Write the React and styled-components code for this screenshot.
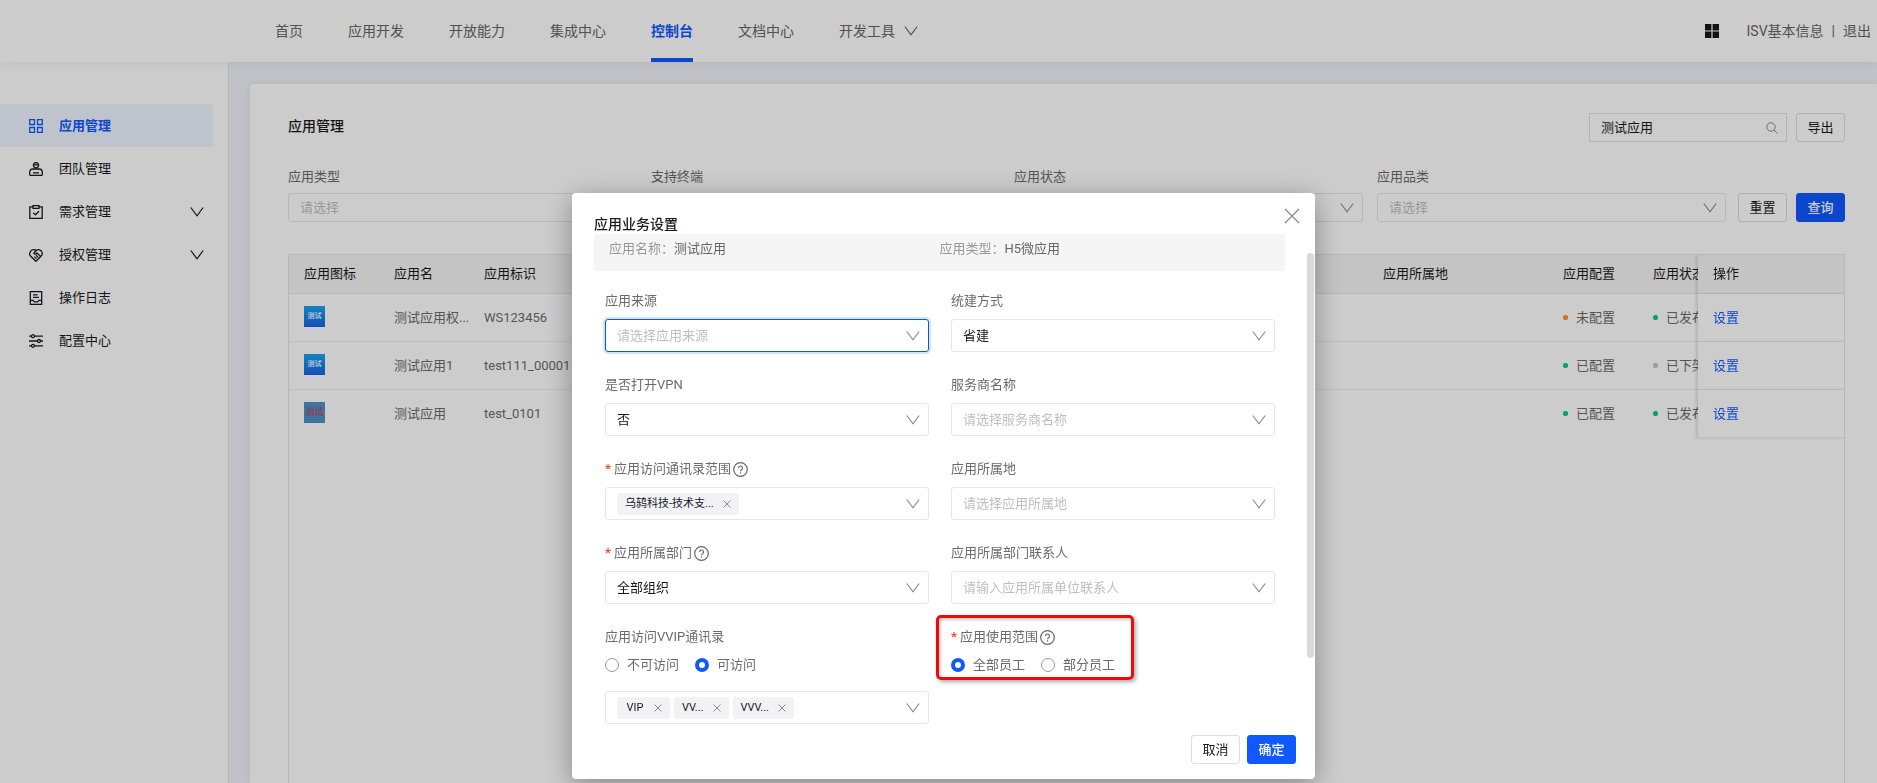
import React, { useState } from 'react'
import styled, { createGlobalStyle, css } from 'styled-components'

const navItems = ['首页', '应用开发', '开放能力', '集成中心', '控制台', '文档中心']

const menuItems = [
  { label: '应用管理', icon: 'grid' },
  { label: '团队管理', icon: 'team' },
  { label: '需求管理', icon: 'clipboard', sub: true },
  { label: '授权管理', icon: 'auth', sub: true },
  { label: '操作日志', icon: 'log' },
  { label: '配置中心', icon: 'config' },
]

const filters = ['应用类型', '支持终端', '应用状态', '应用品类']

const apps = [
  { name: '测试应用权...', code: 'WS123456', config: '未配置', configColor: '#ff9026', status: '已发布', statusColor: '#00cf86' },
  { name: '测试应用1', code: 'test111_00001', config: '已配置', configColor: '#00cf86', status: '已下架', statusColor: '#c4c4c4' },
  { name: '测试应用', code: 'test_0101', config: '已配置', configColor: '#00cf86', status: '已发布', statusColor: '#00cf86', red: true },
]

const Chevron = () => (
  <svg width="14" height="10" viewBox="0 0 14 10" fill="none" stroke="currentColor" strokeWidth="1.2" aria-hidden="true">
    <path d="M.8.5 7 8.8 13.2.5" />
  </svg>
)

const Cross = ({ size }) => (
  <svg width={size} height={size} viewBox="0 0 16 16" fill="none" stroke="currentColor" strokeWidth={size > 10 ? 1.3 : 2} aria-hidden="true">
    <path d="M1 1 15 15M15 1 1 15" />
  </svg>
)

const Help = () => (
  <svg width="15" height="15" viewBox="0 0 15 15" fill="none" stroke="#666" strokeWidth="1.2" aria-hidden="true">
    <circle cx="7.5" cy="7.5" r="6.8" />
    <path d="M5.5 6a2 2 0 1 1 3.1 1.7c-.8.5-1.1.8-1.1 1.5" />
    <path d="M7.5 10.2v1.3" />
  </svg>
)

const menuIcons = {
  grid: <path d="M.7.7h4.8v4.8H.7zM8.5.7h4.8v4.8H8.5zM.7 8.5h4.8v4.8H.7zM8.5 8.5h4.8v4.8H8.5z" />,
  team: (
    <>
      <circle cx="7" cy="3.2" r="2.6" />
      <path d="M4.4 2.8h5.2M4 7h6c2 0 3.3 1.3 3.3 3.2v2.2c0 .6-.4.9-.9.9H1.6c-.5 0-.9-.3-.9-.9v-2.2C.7 8.3 2 7 4 7zM4 10.8h6" />
    </>
  ),
  clipboard: <path d="M4 1.8H.8v11.5h12.4V1.8H10M4 .6h6v2.8H4zM4.2 7.6l2.2 2.2 3.6-3.6" />,
  auth: <path d="M7 13.2 1 7.6C-.2 4.6 2.2 1.2 5.4 1.6L7 2.4c2.4-1.6 5.2-.6 6 1.8.6 1.6.2 2.8-.8 3.8L7 13.2zM7.4 2.4 4.8 5.2c.8 1.4 2.3 1 3.2-.2l3.6 3.4M5.4 8.6l2 2M7 7.2l2.2 2.2" />,
  log: <path d="M1.3.7h11.4v12.6H1.3zM4 3.8h4.5M4 6.3h6M1.3 9.3H4l1.4 1.6h3.2L10 9.3h2.7" />,
  config: (
    <>
      <path d="M0 2.2h2.6M5.4 2.2H14M0 7h8.6M11.4 7H14M0 11.8h2.6M5.4 11.8H14" />
      <circle cx="4" cy="2.2" r="1.5" />
      <circle cx="10" cy="7" r="1.5" />
      <circle cx="4" cy="11.8" r="1.5" />
    </>
  ),
}

const FormSelect = ({ id, label, value, placeholder, required, focused }) => (
  <Field>
    <FieldLabel htmlFor={id}>
      {required && <Star>*</Star>}
      {label}
      {required && <Help />}
    </FieldLabel>
    <SelectBox $height={33} $focused={focused}>
      <select id={id} className={value ? '' : 'empty'} defaultValue={value || ''}>
        <option value={value || ''}>{value || placeholder}</option>
      </select>
      <Chevron />
    </SelectBox>
  </Field>
)

const TagInput = ({ id, tags, label }) => (
  <TagBox>
    {tags.map((tag) => (
      <Tag key={tag}>
        <span>{tag}</span>
        <button type="button" aria-label={`移除${tag}`}>
          <Cross size={8} />
        </button>
      </Tag>
    ))}
    <input id={id} type="text" aria-label={label} />
    <Chevron />
  </TagBox>
)

const RadioGroup = ({ name, options, initial }) => {
  const [value, setValue] = useState(initial)
  return (
    <Radios>
      {options.map((option) => (
        <label key={option}>
          <input type="radio" name={name} checked={value === option} onChange={() => setValue(option)} />
          {option}
        </label>
      ))}
    </Radios>
  )
}

const Header = () => (
  <TopBar>
    <Nav>
      {navItems.map((item) => (
        <NavLink href="#" key={item} $active={item === '控制台'}>{item}</NavLink>
      ))}
      <NavLink href="#">开发工具 <Chevron /></NavLink>
    </Nav>
    <UserArea>
      <svg width="14" height="14" viewBox="0 0 14 14" fill="#16181c" aria-hidden="true">
        <path d="M0 0h6.4v6.4H0zM7.6 0H14v6.4H7.6zM0 7.6h6.4V14H0zM7.6 7.6H14V14H7.6z" />
      </svg>
      <a href="#">ISV基本信息</a>
      <span>|</span>
      <a href="#">退出</a>
    </UserArea>
  </TopBar>
)

const Sidebar = () => (
  <Side>
    {menuItems.map((item, i) => (
      <MenuItem href="#" key={item.label} $active={i === 0}>
        <svg width="14" height="14" viewBox="0 0 14 14" fill="none" stroke="currentColor" strokeWidth="1.3" aria-hidden="true">
          {menuIcons[item.icon]}
        </svg>
        <span>{item.label}</span>
        {item.sub && <Chevron />}
      </MenuItem>
    ))}
  </Side>
)

const AppTable = () => (
  <TableWrap>
    <Table>
      <colgroup>
        <col className="cell" />
        <col className="cell" />
        <col />
        <col className="wide" />
        <col className="cell" />
        <col className="cell" />
        <col className="action" />
      </colgroup>
      <thead>
        <tr>
          <th>应用图标</th>
          <th>应用名</th>
          <th>应用标识</th>
          <th>应用所属地</th>
          <th>应用配置</th>
          <th>应用状态</th>
          <th>操作</th>
        </tr>
      </thead>
      <tbody>
        {apps.map((app) => (
          <tr key={app.code}>
            <td><AppIcon $red={app.red}>测试</AppIcon></td>
            <td>{app.name}</td>
            <td>{app.code}</td>
            <td></td>
            <td><Status $color={app.configColor}>{app.config}</Status></td>
            <td><Status $color={app.statusColor}>{app.status}</Status></td>
            <td><a href="#">设置</a></td>
          </tr>
        ))}
      </tbody>
    </Table>
  </TableWrap>
)

const SettingsModal = () => (
  <Overlay>
    <Modal role="dialog" aria-labelledby="modal-title">
      <CloseButton type="button" aria-label="关闭"><Cross size={16} /></CloseButton>
      <ModalTitle id="modal-title">应用业务设置</ModalTitle>
      <ModalBody>
        <Summary>
          <div>应用名称：<b>测试应用</b></div>
          <div>应用类型：<b>H5微应用</b></div>
        </Summary>
        <FormGrid>
          <FormSelect id="source" label="应用来源" placeholder="请选择应用来源" focused />
          <FormSelect id="mode" label="统建方式" value="省建" />
          <FormSelect id="vpn" label="是否打开VPN" value="否" />
          <FormSelect id="vendor" label="服务商名称" placeholder="请选择服务商名称" />
          <Field>
            <FieldLabel htmlFor="contacts"><Star>*</Star>应用访问通讯录范围<Help /></FieldLabel>
            <TagInput id="contacts" tags={['乌鸫科技-技术支...']} />
          </Field>
          <FormSelect id="region" label="应用所属地" placeholder="请选择应用所属地" />
          <FormSelect id="dept" label="应用所属部门" value="全部组织" required />
          <FormSelect id="person" label="应用所属部门联系人" placeholder="请输入应用所属单位联系人" />
          <Field>
            <FieldLabel as="div">应用访问VVIP通讯录</FieldLabel>
            <RadioGroup name="vvip" options={['不可访问', '可访问']} initial="可访问" />
            <TagInput id="vip" label="应用访问VVIP通讯录" tags={['VIP', 'VV...', 'VVV...']} />
          </Field>
          <Highlight>
            <FieldLabel as="div"><Star>*</Star>应用使用范围<Help /></FieldLabel>
            <RadioGroup name="scope" options={['全部员工', '部分员工']} initial="全部员工" />
          </Highlight>
        </FormGrid>
      </ModalBody>
      <ModalFooter>
        <Button type="button">取消</Button>
        <Button type="button" $primary>确定</Button>
      </ModalFooter>
      <ScrollThumb />
    </Modal>
  </Overlay>
)

const App = () => {
  return (
    <>
      <GlobalStyle />
      <Page>
        <Header />
        <Content>
          <Sidebar />
          <Card>
            <CardHead>
              <h1>应用管理</h1>
              <SearchBox>
                <input type="text" aria-label="搜索应用" defaultValue="测试应用" />
                <svg width="12" height="12" viewBox="0 0 12 12" fill="none" stroke="#8a8a8a" aria-hidden="true">
                  <circle cx="5" cy="5" r="4.2" />
                  <path d="m8 8 3.5 3.5" />
                </svg>
              </SearchBox>
              <Button type="button">导出</Button>
            </CardHead>
            <FilterRow>
              {filters.map((filter, i) => (
                <FilterField key={filter}>
                  <FieldLabel htmlFor={`filter-${i}`}>{filter}</FieldLabel>
                  <SelectBox $height={29}>
                    <select id={`filter-${i}`} className="empty">
                      <option>请选择</option>
                    </select>
                    <Chevron />
                  </SelectBox>
                </FilterField>
              ))}
              <FilterButtons>
                <Button type="button">重置</Button>
                <Button type="button" $primary>查询</Button>
              </FilterButtons>
            </FilterRow>
            <AppTable />
          </Card>
        </Content>
      </Page>
      <SettingsModal />
    </>
  )
}

export default App

const GlobalStyle = createGlobalStyle`
  * {
    box-sizing: border-box;
  }
  body {
    margin: 0;
    overflow: hidden;
    font-family: Roboto, "Noto Sans CJK SC", sans-serif;
    font-size: 13px;
    line-height: 20px;
    color: #171a1d;
  }
  a {
    color: inherit;
    text-decoration: none;
  }
  button, input, select {
    font: inherit;
    color: inherit;
  }
  svg {
    flex-shrink: 0;
  }
`

const Page = styled.div`
  display: flex;
  flex-direction: column;
  height: 100vh;
  background: #f2f3f9;
`

const TopBar = styled.header`
  display: flex;
  justify-content: space-between;
  align-items: center;
  height: 62px;
  flex-shrink: 0;
  padding: 0 6px 0 275px;
  background: #fff;
  color: #666;
  font-size: 14px;
  box-shadow: 0 2px 10px rgba(0, 0, 0, 0.06);
  z-index: 1;
`

const Nav = styled.nav`
  display: flex;
  gap: 45px;
  height: 100%;
`

const NavLink = styled.a`
  display: flex;
  align-items: center;
  gap: 9px;
  border-top: 4px solid transparent;
  border-bottom: 4px solid transparent;
  ${(props) => props.$active && css`
    color: #1058ff;
    font-weight: 700;
    border-bottom-color: #1058ff;
  `}
`

const UserArea = styled.div`
  display: flex;
  align-items: center;
  gap: 8px;

  svg {
    margin-right: 20px;
  }
`

const Content = styled.div`
  display: flex;
  flex: 1;
  min-height: 0;
`

const Side = styled.aside`
  width: 229px;
  flex-shrink: 0;
  padding: 42px 15px 0 0;
  background: #fff;
  border-right: 1px solid #e4e5ea;
`

const MenuItem = styled.a`
  display: flex;
  align-items: center;
  gap: 16px;
  height: 43px;
  padding: 0 9px 0 29px;
  ${(props) => props.$active && css`
    color: #1058ff;
    font-weight: 700;
    background: #eff5ff;
  `}

  span {
    flex: 1;
  }
`

const Card = styled.main`
  display: flex;
  flex-direction: column;
  flex: 1;
  min-width: 0;
  margin: 22px 0 0 21px;
  padding: 29px 32px 0 38px;
  background: #fff;
  border-radius: 4px 0 0 0;
  box-shadow: 0 0 10px rgba(0, 0, 0, 0.08);
`

const CardHead = styled.div`
  display: flex;
  gap: 9px;
  margin-bottom: 25px;

  h1 {
    flex: 1;
    margin: 0;
    font-size: 14px;
    font-weight: 500;
    line-height: 26px;
  }
`

const SearchBox = styled.div`
  display: flex;
  align-items: center;
  width: 198px;
  height: 29px;
  padding: 0 8px 0 11px;
  border: 1px solid #dfe0e3;

  input {
    flex: 1;
    min-width: 0;
    padding: 0;
    border: 0;
    outline: 0;
    background: none;
  }
`

const Button = styled.button`
  width: 49px;
  height: 29px;
  padding: 0;
  border: 1px solid ${(props) => (props.$primary ? '#1058ff' : '#dcdde0')};
  border-radius: 3px;
  background: ${(props) => (props.$primary ? '#1058ff' : '#fff')};
  color: ${(props) => (props.$primary ? '#fff' : '#171a1d')};
  font-weight: ${(props) => (props.$primary ? 500 : 400)};
`

const FilterRow = styled.div`
  display: flex;
  align-items: flex-end;
  gap: 12px;
  margin-bottom: 32px;
`

const FilterField = styled.div`
  display: flex;
  flex-direction: column;
  flex: 1;
  gap: 6px;

  & + & {
    margin-left: 2px;
  }
`

const FilterButtons = styled.div`
  display: flex;
  gap: 9px;
`

const SelectBox = styled.div`
  display: grid;
  align-items: center;
  height: ${(props) => props.$height}px;
  border: 1px solid #e5e6e8;
  border-radius: 3px;
  color: #8f8f8f;
  ${(props) => props.$focused && css`
    border-color: #1257d0;
    box-shadow: 0 0 0 2px #cfe6ff;
  `}

  select {
    grid-area: 1 / 1;
    width: 100%;
    height: 100%;
    padding: 0 30px 0 11px;
    border: 0;
    outline: 0;
    background: none;
    appearance: none;
    color: #171a1d;
  }

  select.empty {
    color: #bfbfbf;
  }

  svg {
    grid-area: 1 / 1;
    justify-self: end;
    margin-right: 8px;
    pointer-events: none;
  }
`

const TableWrap = styled.div`
  flex: 1;
  min-height: 0;
  overflow: hidden;
  border: 1px solid #e6e6e6;
  border-bottom: 0;
`

const Table = styled.table`
  width: calc(100% + 30px);
  table-layout: fixed;
  border-collapse: separate;
  border-spacing: 0;

  .cell {
    width: 90px;
  }
  .wide {
    width: 180px;
  }
  .action {
    width: 146px;
  }

  th, td {
    padding: 0 0 0 15px;
    text-align: left;
    white-space: nowrap;
  }

  th {
    height: 39px;
    font-weight: 400;
    background: #f5f5f5;
    border-bottom: 1px solid #e9e9e9;
  }

  td {
    height: 48px;
    color: #6b6b6b;
    background: #fff;
    border-bottom: 1px solid #efefef;
  }

  tr:last-child td:not(:last-child) {
    border-bottom-color: transparent;
  }

  th:last-child, td:last-child {
    position: sticky;
    right: 0;
    box-shadow: -2px 0 3px rgba(0, 0, 0, 0.12);
  }

  td a {
    color: #1058ff;
  }
`

const AppIcon = styled.div`
  display: grid;
  place-items: center;
  width: 21px;
  height: 21px;
  margin-bottom: 3px;
  line-height: 1;
  ${(props) => props.$red ? css`
    font-size: 9px;
    color: #d8304c;
    background: #4a93c8;
  ` : css`
    font-size: 7px;
    font-weight: 700;
    color: #dff0ff;
    background: linear-gradient(#1ba6ee, #1a62e8);
  `}
`

const Status = styled.span`
  display: flex;
  align-items: center;
  gap: 8px;

  &::before {
    content: '';
    width: 5px;
    height: 5px;
    border-radius: 2px;
    background: ${(props) => props.$color};
  }
`

const Overlay = styled.div`
  position: fixed;
  inset: 0;
  display: flex;
  justify-content: center;
  align-items: flex-start;
  padding: 193px 0 0 10px;
  background: rgba(0, 0, 0, 0.2);
  z-index: 10;
`

const Modal = styled.section`
  position: relative;
  width: 743px;
  padding: 21px 19px 15px 22px;
  background: #fff;
  border-radius: 4px;
  box-shadow: 0 6px 28px rgba(0, 0, 0, 0.35);
`

const CloseButton = styled.button`
  position: absolute;
  top: 15px;
  right: 15px;
  display: flex;
  padding: 0;
  border: 0;
  background: none;
  color: #8c8c8c;
`

const ModalTitle = styled.h2`
  margin: 0;
  font-size: 14px;
  font-weight: 500;
`

const ModalBody = styled.div`
  padding-right: 11px;
`

const Summary = styled.div`
  display: grid;
  grid-template-columns: 1fr 1fr;
  height: 37px;
  padding: 5px 15px 0;
  background: #f5f5f5;
  color: #999;

  b {
    font-weight: 400;
    color: #666;
  }
`

const FormGrid = styled.form`
  display: grid;
  grid-template-columns: repeat(2, minmax(0, 1fr));
  gap: 23px 22px;
  padding: 20px 10px 11px 11px;
`

const Field = styled.div`
  display: flex;
  flex-direction: column;
  gap: 8px;
`

const FieldLabel = styled.label`
  display: flex;
  align-items: center;
  color: #6b6b6b;

  svg {
    margin-left: 2px;
  }
`

const Star = styled.span`
  margin-right: 3px;
  color: #f5491e;
  font-weight: 700;
`

const TagBox = styled.div`
  display: flex;
  align-items: center;
  gap: 4px;
  height: 33px;
  padding: 0 8px 0 11px;
  border: 1px solid #e5e6e8;
  border-radius: 3px;
  color: #8f8f8f;

  input {
    flex: 1;
    min-width: 0;
    border: 0;
    outline: 0;
    background: none;
  }
`

const Tag = styled.span`
  display: flex;
  align-items: center;
  gap: 9px;
  height: 22px;
  padding: 0 8px;
  border-radius: 3px;
  background: #f1f1f6;
  font-size: 11px;

  span {
    min-width: 20px;
    text-align: center;
    color: #171a1d;
  }

  button {
    display: flex;
    padding: 0;
    border: 0;
    background: none;
    color: #8c8c8c;
  }
`

const Radios = styled.div`
  display: flex;
  gap: 16px;
  color: #6b6b6b;

  & + div {
    margin-top: 8px;
  }

  label {
    display: flex;
    align-items: center;
    gap: 8px;
  }

  input {
    width: 14px;
    height: 14px;
    margin: 0;
    appearance: none;
    border: 1px solid #999;
    border-radius: 50%;
    background: #fff;
  }

  input:checked {
    border: 4px solid #1058ff;
  }
`

const Highlight = styled(Field)`
  position: relative;
  justify-self: start;
  align-self: start;

  &::after {
    content: '';
    position: absolute;
    inset: -12px -19px -5px -15px;
    border: 3px solid #ee0a0a;
    border-radius: 5px;
    box-shadow: 2px 2px 4px rgba(0, 0, 0, 0.35), inset 2px 2px 3px rgba(0, 0, 0, 0.2);
    pointer-events: none;
  }
`

const ModalFooter = styled.footer`
  display: flex;
  justify-content: flex-end;
  gap: 7px;
`

const ScrollThumb = styled.div`
  position: absolute;
  top: 60px;
  right: 1px;
  width: 7px;
  height: 405px;
  border-radius: 4px;
  background: #d9d9d9;
`
